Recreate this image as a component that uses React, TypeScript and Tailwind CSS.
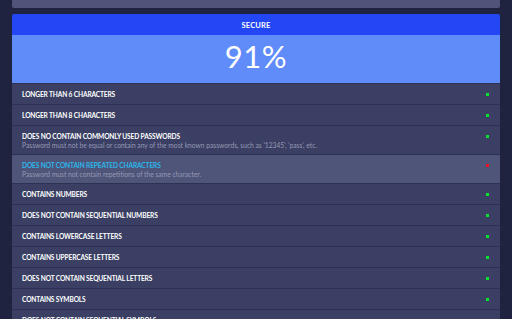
import React from 'react'

type Rule = { title: string; desc?: string; ok: boolean; active?: boolean }

const rules: Rule[] = [
  { title: 'Longer than 6 characters', ok: true },
  { title: 'Longer than 8 characters', ok: true },
  {
    title: 'Does no contain commonly used passwords',
    desc: "Password must not be equal or contain any of the most known passwords, such as '12345', 'pass', etc.",
    ok: true,
  },
  {
    title: 'Does not contain repeated characters',
    desc: 'Password must not contain repetitions of the same character.',
    ok: false,
    active: true,
  },
  { title: 'Contains numbers', ok: true },
  { title: 'Does not contain sequential numbers', ok: true },
  { title: 'Contains lowercase letters', ok: true },
  { title: 'Contains uppercase letters', ok: true },
  { title: 'Does not contain sequential letters', ok: true },
  { title: 'Contains symbols', ok: true },
  { title: 'Does not contain sequential symbols', ok: true },
]

export default function App() {
  return (
    <div
      className="w-[512px] h-[319px] overflow-hidden bg-[#1f2340] px-3"
      style={{ fontFamily: 'Lato, "Open Sans", sans-serif' }}
    >
      <div className="h-[8px] bg-[#4f5478] rounded-b-[2px]" />
      <div className="mt-[6px] rounded-t-[2px] overflow-hidden">
        <div className="h-[21px] bg-[#2447f5] flex items-center justify-center pt-[2px] text-white text-[7.5px] font-bold uppercase tracking-[0.02em]">
          Secure
        </div>
        <div className="h-[48px] bg-[#608cf9] flex items-center justify-center pb-[5px] text-white text-[31px] leading-none tracking-[0.02em]">
          91%
        </div>
        <div className="border-t border-[#2e3252]">
          {rules.map((r) => (
            <div
              key={r.title}
              className={`flex items-start justify-between pl-[10px] pr-[11px] border-b border-[#2e3252] ${
                r.active ? 'bg-[#4f5479]' : 'bg-[#3a3f63]'
              } ${r.desc ? 'h-[29px] pt-[6px]' : 'h-[21px] pt-[6px]'}`}
            >
              <div className="flex flex-col">
                <span
                  className={`text-[6.6px] font-bold uppercase leading-[9px] tracking-[-0.02em] ${
                    r.active ? 'text-[#2cb7ea]' : 'text-white'
                  }`}
                >
                  {r.title}
                </span>
                {r.desc && (
                  <span className="text-[6.7px] leading-[9px] text-[#9699b5]">{r.desc}</span>
                )}
              </div>
              <span
                className={`mt-[3px] w-[3px] h-[3px] ${r.ok ? 'bg-[#0be32a]' : 'bg-[#e8101c]'}`}
              />
            </div>
          ))}
        </div>
      </div>
    </div>
  )
}
